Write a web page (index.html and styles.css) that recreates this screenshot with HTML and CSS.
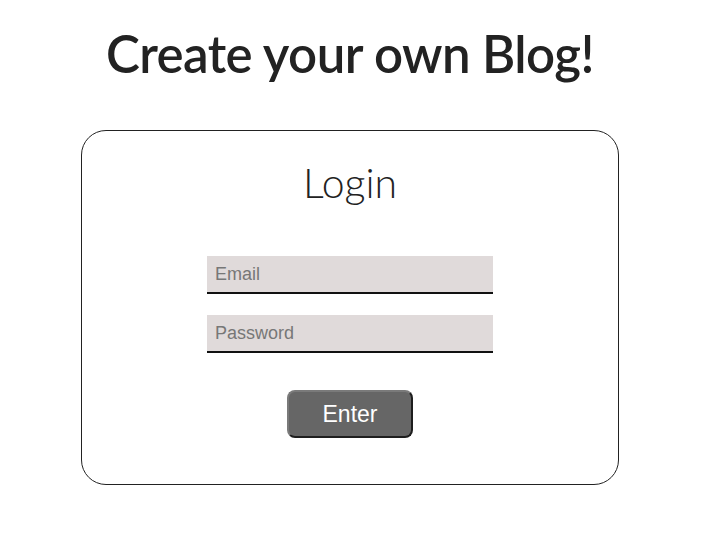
FILE: index.html
```html
<!DOCTYPE html>
<html>
<head>
<meta charset="utf-8">
<link rel="stylesheet" href="styles.css">
</head>
<body>
<div class="page">
  <h1 class="title">Create your own Blog!</h1>
  <form class="card">
    <h2 class="card-title">Login</h2>
    <input class="field" type="email" placeholder="Email">
    <input class="field" type="password" placeholder="Password">
    <button class="btn" type="button">Enter</button>
  </form>
</div>
</body>
</html>
```
FILE: styles.css
```css
html, body {
  margin: 0;
  padding: 0;
  background: #fff;
}
.page {
  width: 700px;
  display: flex;
  flex-direction: column;
  align-items: center;
}
.title {
  font-family: "Lato", "Open Sans", sans-serif;
  font-weight: 600;
  font-size: 51px;
  letter-spacing: -0.6px;
  color: #222;
  margin: 22px 0 0 0;
  line-height: 64px;
}
.card {
  box-sizing: border-box;
  width: 538px;
  height: 355px;
  margin-top: 44px;
  border: 1px solid #222;
  border-radius: 25px;
  display: flex;
  flex-direction: column;
  align-items: center;
}
.card-title {
  font-family: "Lato", "Open Sans", sans-serif;
  font-weight: 300;
  font-size: 41px;
  color: #222;
  margin: 29px 0 0 0;
  line-height: 46px;
}
.field {
  box-sizing: border-box;
  width: 286px;
  height: 38px;
  border: none;
  border-bottom: 2px solid #111;
  background: #e0dada;
  padding: 0 8px;
  font-family: "Liberation Sans", Arial, sans-serif;
  font-size: 18px;
  color: #333;
  outline: none;
}
.field::placeholder {
  color: #777;
}
.card-title + .field {
  margin-top: 50px;
}
.field + .field {
  margin-top: 21px;
}
.btn {
  box-sizing: border-box;
  margin-top: 37px;
  width: 126px;
  height: 48px;
  background: #666;
  color: #fff;
  border: 2px solid;
  border-color: #7a7a7a #1e1e1e #1e1e1e #7a7a7a;
  border-radius: 8px;
  font-family: "Liberation Sans", Arial, sans-serif;
  font-size: 23px;
  padding: 0;
}
```
